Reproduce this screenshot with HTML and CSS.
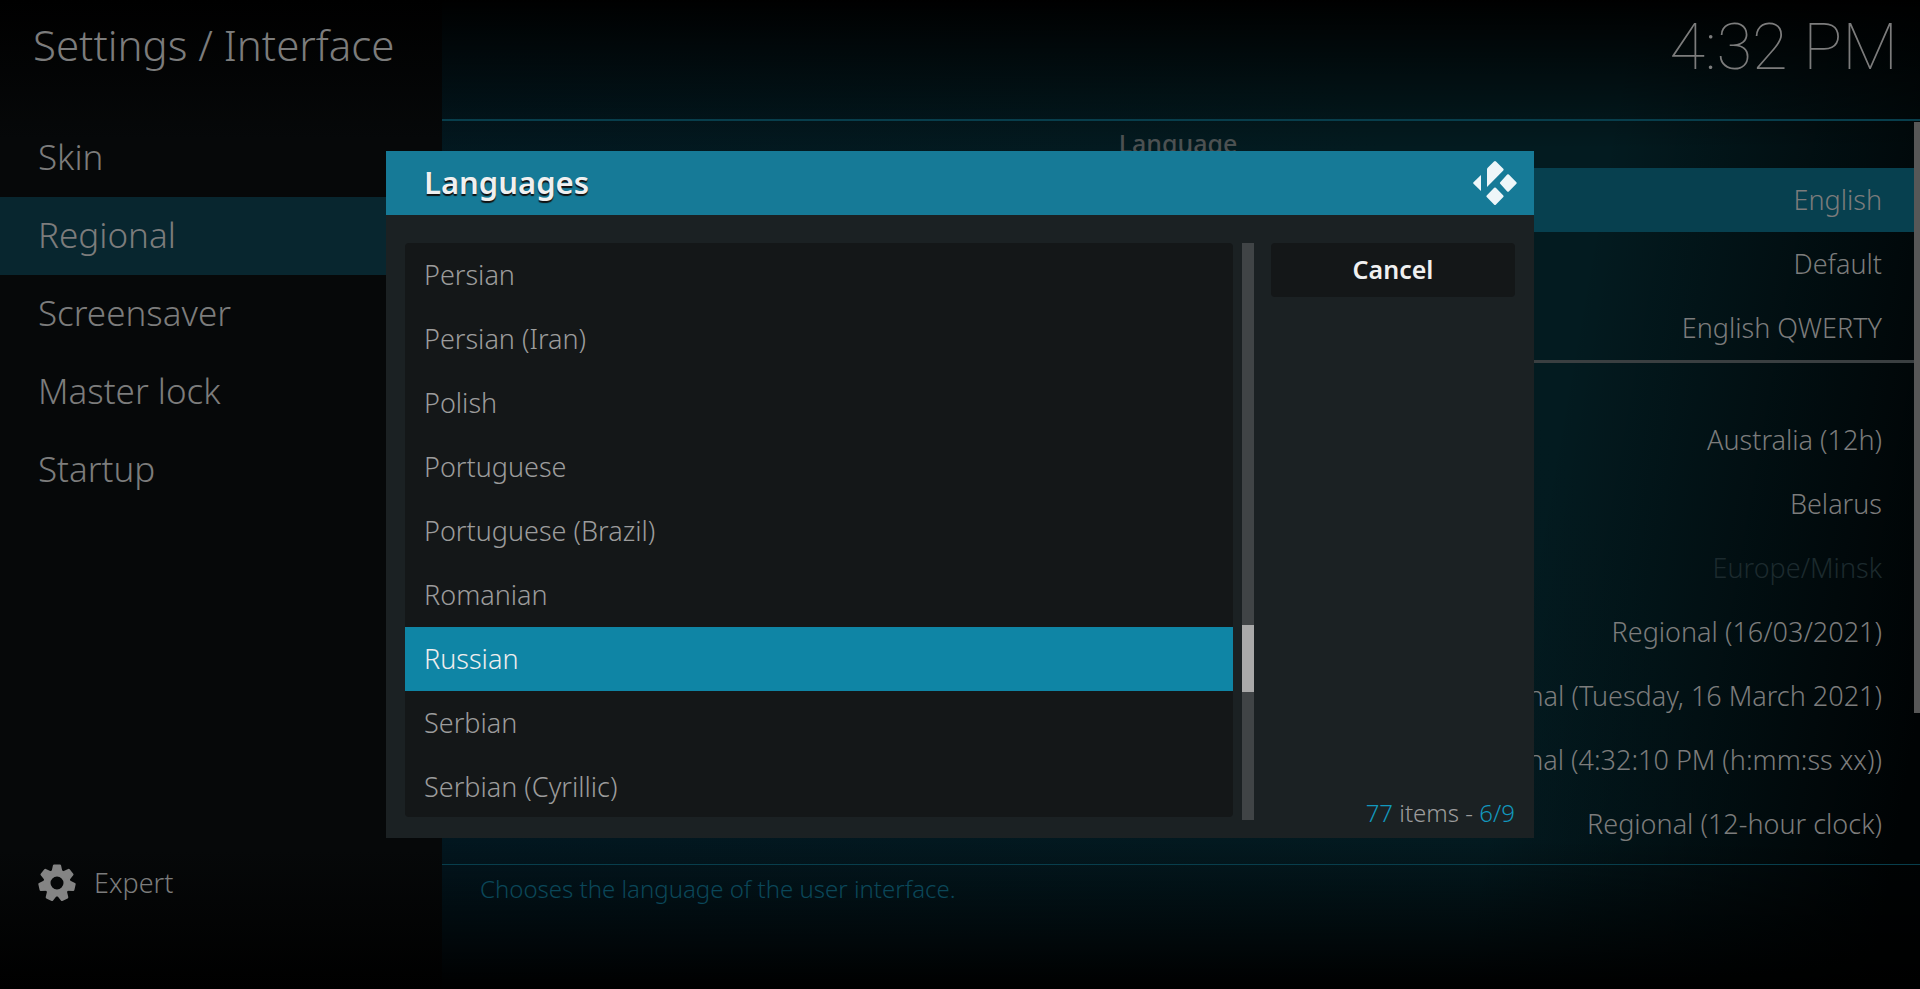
FILE: index.html
```html
<!DOCTYPE html>
<html lang="en">
<head>
  <meta charset="utf-8">
  <title>Settings / Interface</title>
  <link rel="stylesheet" href="styles.css">
</head>
<body>
  <div class="screen">
    <aside class="sidebar">
      <h1>Settings / Interface</h1>
      <nav class="menu">
        <a href="#skin">Skin</a>
        <a href="#regional" class="active">Regional</a>
        <a href="#screensaver">Screensaver</a>
        <a href="#masterlock">Master lock</a>
        <a href="#startup">Startup</a>
      </nav>
      <button class="level">
        <svg width="38" height="38" viewBox="0 0 38 38">
          <g fill="#848484">
            <path id="tooth" d="M13.500 8 L14.900 1.500 Q15.100 .5 16.100 .5 H21.900 Q22.900 .5 23.100 1.500 L24.500 8 Z"/>
            <use href="#tooth" transform="rotate(51.430 19 19)"/>
            <use href="#tooth" transform="rotate(102.860 19 19)"/>
            <use href="#tooth" transform="rotate(154.290 19 19)"/>
            <use href="#tooth" transform="rotate(205.710 19 19)"/>
            <use href="#tooth" transform="rotate(257.140 19 19)"/>
            <use href="#tooth" transform="rotate(308.570 19 19)"/>
          </g>
          <circle cx="19" cy="19" r="10" fill="none" stroke="#848484" stroke-width="7"/>
        </svg>
        Expert
      </button>
    </aside>

    <main class="main">
      <header class="topbar">
        <time>4:32 PM</time>
      </header>
      <div class="settings">
        <h2>Language</h2>
        <button class="value active">English</button>
        <button class="value">Default</button>
        <button class="value">English QWERTY</button>
        <hr>
        <button class="value">Australia (12h)</button>
        <button class="value">Belarus</button>
        <button class="value" disabled>Europe/Minsk</button>
        <button class="value">Regional (16/03/2021)</button>
        <button class="value">Regional (Tuesday, 16 March 2021)</button>
        <button class="value">Regional (4:32:10 PM (h:mm:ss xx))</button>
        <button class="value">Regional (12-hour clock)</button>
        <div class="page-scroll"></div>
      </div>
      <p class="hint">Chooses the language of the user interface.</p>
    </main>
  </div>

  <div class="overlay">
    <section class="dialog" role="dialog" aria-labelledby="dialogTitle">
      <header class="dialog-header">
        <h2 id="dialogTitle">Languages</h2>
        <svg width="46" height="46" viewBox="0 0 46 46" fill="#eef6f9">
          <path d="M9 15 V31 L1.500 23.800 Q.7 23 1.500 22.200 Z"/>
          <path d="M15 27 V9.500 Q15 8.500 15.700 7.800 L22 1.500 Q23 .5 24 1.500 L31.300 8.800 Q32.100 9.600 31.300 10.400 Z"/>
          <path d="M35.200 14.600 Q36 13.800 36.800 14.600 L44.400 22.200 Q45.200 23 44.400 23.800 L36.800 31.400 Q36 32.200 35.200 31.400 L28.200 23.800 Q27.400 23 28.200 22.200 Z"/>
          <path d="M22.200 27.800 Q23 27 23.800 27.800 L31.300 35.400 Q32.100 36.200 31.300 37 L24 44.500 Q23 45.500 22 44.500 L14.700 37 Q13.900 36.200 14.700 35.400 Z"/>
        </svg>
      </header>
      <div class="dialog-body">
        <ul class="list">
          <li><button>Persian</button></li>
          <li><button>Persian (Iran)</button></li>
          <li><button>Polish</button></li>
          <li><button>Portuguese</button></li>
          <li><button>Portuguese (Brazil)</button></li>
          <li><button>Romanian</button></li>
          <li><button class="selected">Russian</button></li>
          <li><button>Serbian</button></li>
          <li><button>Serbian (Cyrillic)</button></li>
        </ul>
        <div class="scrollbar"><div class="thumb"></div></div>
        <div class="actions">
          <button class="cancel">Cancel</button>
          <p class="count"><span>77</span> items - <span>6/9</span></p>
        </div>
      </div>
    </section>
  </div>
</body>
</html>
```
FILE: styles.css
```css
:root {
  --text: #7c7c7c;
  --accent: #0f85a5;
  --row: 64px;
}

* {
  box-sizing: border-box;
}

body {
  margin: 0;
  background: #000;
  color: var(--text);
  font-family: "Noto Sans", sans-serif;
  font-size: 27px;
  font-weight: 300;
}

h1, h2, p, ul {
  margin: 0;
  padding: 0;
}

button {
  border: 0;
  background: none;
  color: inherit;
  font: inherit;
}

.screen {
  display: flex;
  height: 100vh;
  overflow: hidden;
}

/* left column */
.sidebar {
  display: flex;
  flex-direction: column;
  flex: none;
  width: 442px;
  padding-bottom: 78px;
  background: linear-gradient(#000, #060809 14%, #060809 86%, #000);
}

.sidebar h1 {
  height: 119px;
  padding: 16px 33px 0;
  font-size: 42px;
  font-weight: 300;
  line-height: 57px;
}

.menu a {
  display: block;
  padding: 0 38px 3px;
  color: inherit;
  font-size: 35px;
  line-height: 75px;
  text-decoration: none;
}

.menu a.active {
  background: #08262f;
}

.level {
  display: flex;
  align-items: center;
  gap: 18px;
  margin-top: auto;
  padding: 0 38px;
  line-height: 56px;
}

/* settings */
.main {
  display: flex;
  flex-direction: column;
  flex: 1;
  background:
    linear-gradient(#000, transparent 15%, transparent 85%, #000),
    linear-gradient(100deg, transparent 72%, #000304 97%),
    linear-gradient(60deg, #02161f, #031b20 70%);
}

.topbar {
  height: 121px;
  padding: 9px 22px 0;
  border-bottom: 2px solid #083e4c;
  text-align: right;
}

.topbar time {
  font-family: Roboto, sans-serif;
  font-size: 65px;
  font-weight: 100;
  line-height: 76px;
}

.settings {
  position: relative;
  flex: 1;
  padding-right: 6px;
}

.settings h2 {
  padding-bottom: 3px;
  font-size: 25px;
  font-weight: 500;
  line-height: 44px;
  text-align: center;
  color: #4c5152;
}

.settings hr {
  height: 3px;
  margin: 0 0 45px;
  border: 0;
  background: #3a3f41;
}

.value {
  display: block;
  width: 100%;
  height: var(--row);
  padding: 0 32px 2px;
  text-align: right;
}

.value.active {
  background: #07404f;
}

.value:disabled {
  color: #1c2a2e;
}

.page-scroll {
  position: absolute;
  top: 1px;
  right: 0;
  width: 6px;
  height: 591px;
  background: #575757;
}

.hint {
  height: 125px;
  padding: 0 38px;
  border-top: 1px solid #083e4c;
  color: #0b4759;
  font-size: 24px;
  line-height: 48px;
}

/* dialog */
.overlay {
  position: absolute;
  inset: 0;
  display: flex;
  align-items: center;
  justify-content: center;
}

.dialog {
  width: 1148px;
  background: #1b2123;
}

.dialog-header {
  display: flex;
  align-items: center;
  justify-content: space-between;
  height: var(--row);
  padding: 0 16px 0 38px;
  background: #167a97;
}

.dialog-header h2 {
  padding-bottom: 3px;
  color: #f0f0f0;
  font-size: 31px;
  font-weight: 600;
  text-shadow: 0 2px 1px #111;
}

.dialog-body {
  display: flex;
  height: 623px;
  padding: 28px 19px 18px;
}

.list {
  flex: 1;
  height: 574px;
  overflow: hidden;
  border-radius: 4px;
  background: #141718;
  list-style: none;
}

.list button {
  display: block;
  width: 100%;
  height: var(--row);
  padding: 0 19px 2px;
  color: #9c9c9c;
  text-align: left;
}

.list .selected {
  background: var(--accent);
  color: #eee;
}

.scrollbar {
  width: 12px;
  margin: 0 17px 0 9px;
  padding-top: 382px;
  background: #404446;
}

.thumb {
  height: 67px;
  background: #a9a9a9;
}

.actions {
  display: flex;
  flex-direction: column;
  justify-content: space-between;
  width: 244px;
}

.cancel {
  height: 54px;
  padding-bottom: 3px;
  border-radius: 4px;
  background: #141718;
  color: #f0f0f0;
  font-size: 25px;
  font-weight: 600;
}

.count {
  color: #9c9c9c;
  font-size: 24px;
  line-height: 14px;
  text-align: right;
}

.count span {
  color: #1297bd;
}
```
